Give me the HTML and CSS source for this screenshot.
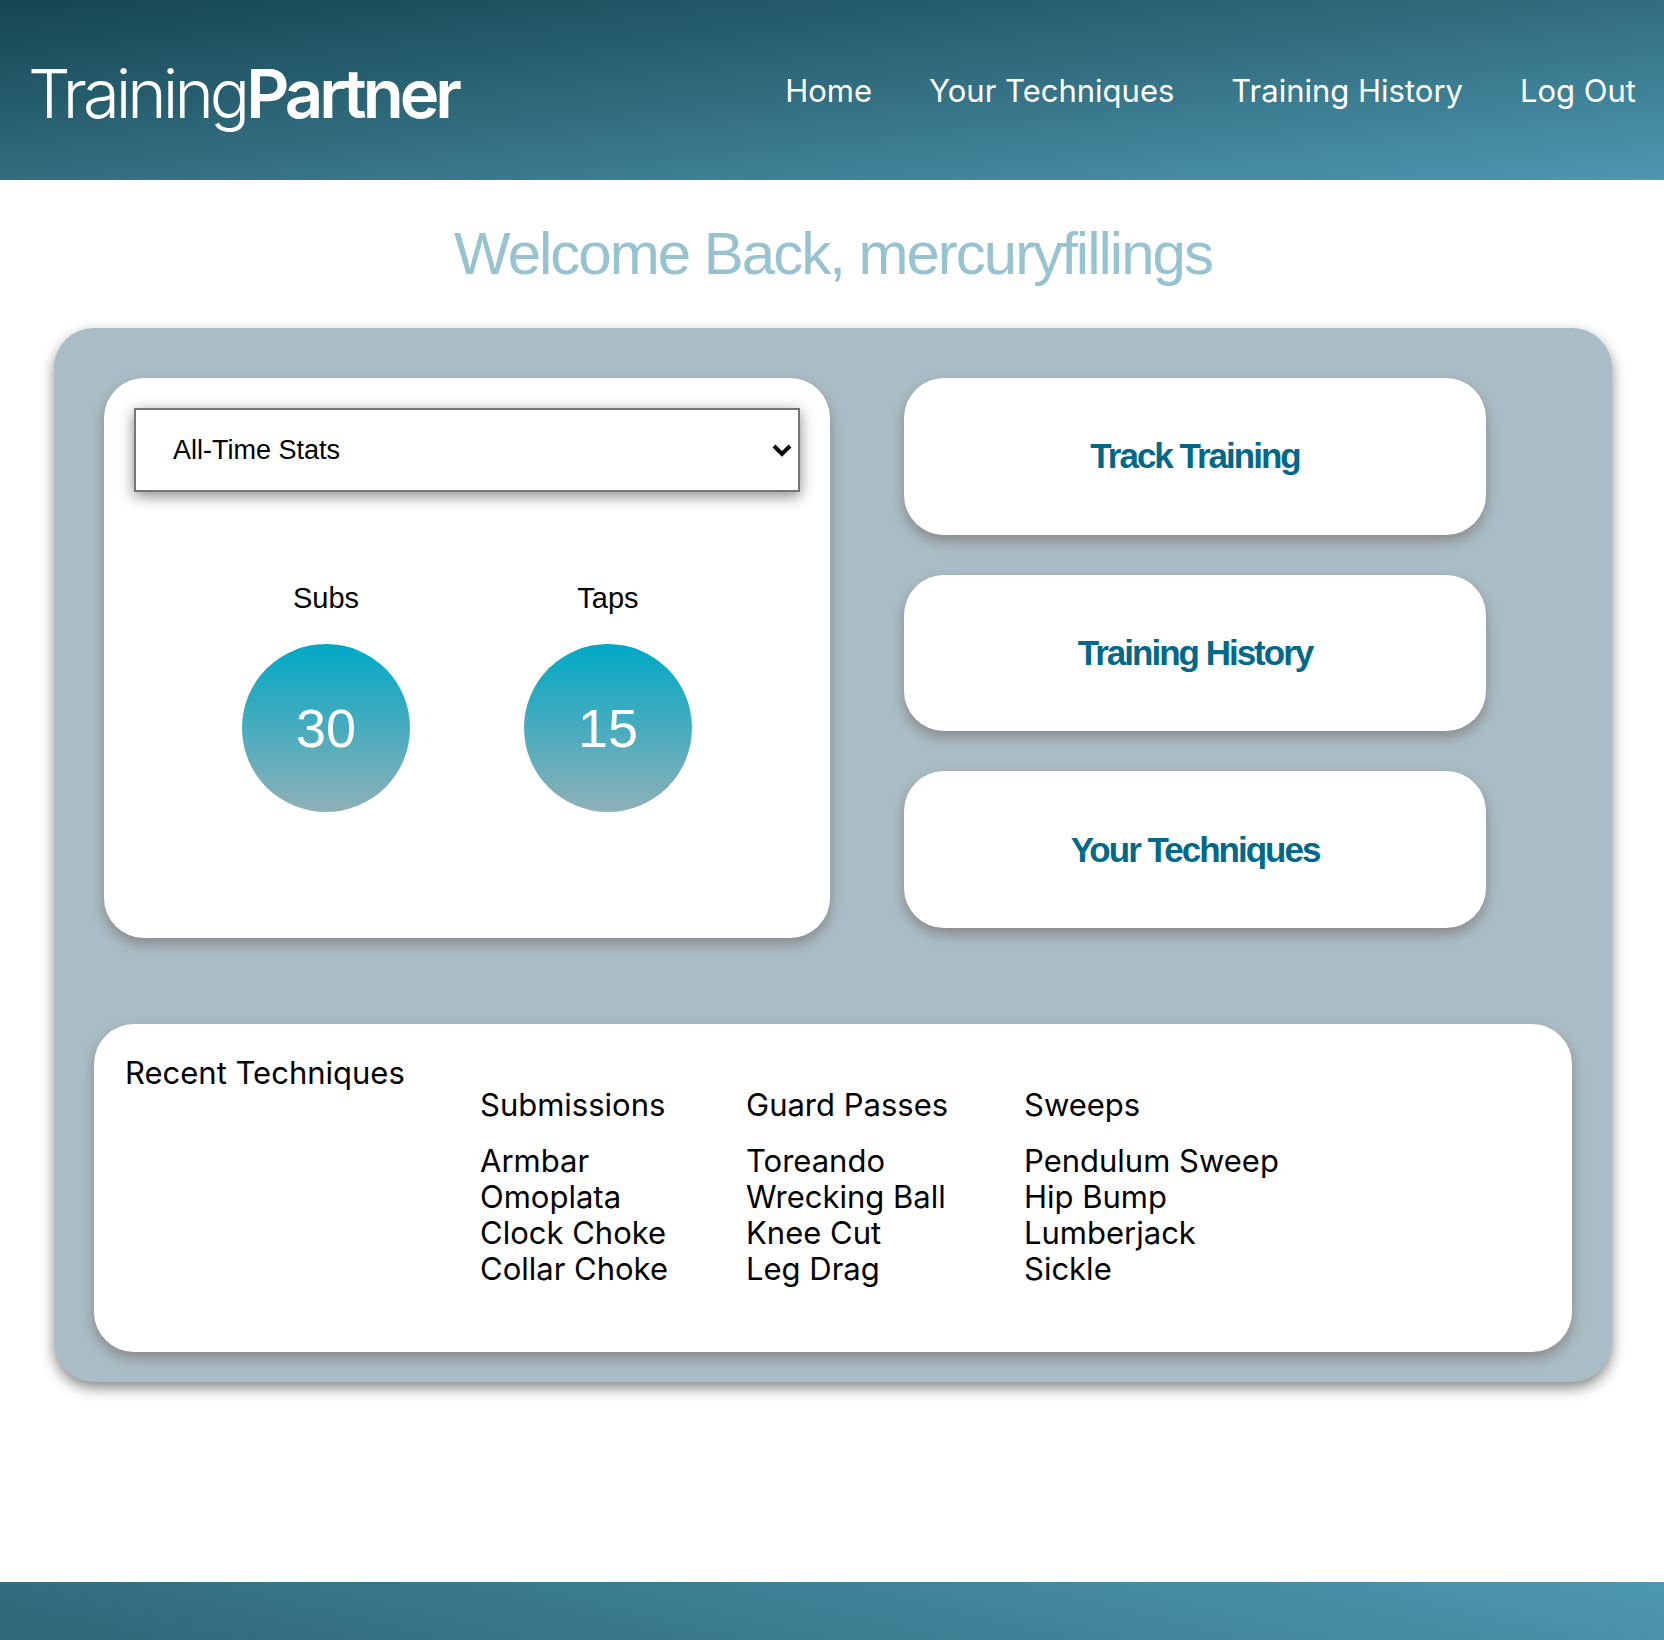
FILE: index.html
```html
<!DOCTYPE html>
<html lang="en">
<head>
  <meta charset="utf-8">
  <meta name="viewport" content="width=device-width, initial-scale=1">
  <title>TrainingPartner</title>
  <link rel="stylesheet" href="styles.css">
</head>
<body>
  <header class="site-header">
    <a class="logo" href="#">Training<strong>Partner</strong></a>
    <nav class="nav">
      <a href="#">Home</a>
      <a href="#">Your Techniques</a>
      <a href="#">Training History</a>
      <a href="#">Log Out</a>
    </nav>
  </header>

  <main class="main">
    <h1 class="welcome">Welcome Back, mercuryfillings</h1>

    <section class="panel">
      <div class="overview">
        <section class="card stats">
          <div class="range">
            <select class="range-select" aria-label="Stats period">
              <option>All-Time Stats</option>
            </select>
            <svg class="range-arrow" viewBox="0 0 20 13" width="20" height="13" aria-hidden="true">
              <path d="M2 2 L10 10 L18 2" fill="none" stroke="#000" stroke-width="4"/>
            </svg>
          </div>
          <div class="totals">
            <div class="total">
              <span class="total-label">Subs</span>
              <span class="total-value">30</span>
            </div>
            <div class="total">
              <span class="total-label">Taps</span>
              <span class="total-value">15</span>
            </div>
          </div>
        </section>

        <div class="actions">
          <button class="card action" type="button">Track Training</button>
          <button class="card action" type="button">Training History</button>
          <button class="card action" type="button">Your Techniques</button>
        </div>
      </div>

      <section class="card recent">
        <h2 class="recent-title">Recent Techniques</h2>
        <div class="group">
          <h3 class="group-title">Submissions</h3>
          <ul class="group-list">
            <li>Armbar</li>
            <li>Omoplata</li>
            <li>Clock Choke</li>
            <li>Collar Choke</li>
          </ul>
        </div>
        <div class="group">
          <h3 class="group-title">Guard Passes</h3>
          <ul class="group-list">
            <li>Toreando</li>
            <li>Wrecking Ball</li>
            <li>Knee Cut</li>
            <li>Leg Drag</li>
          </ul>
        </div>
        <div class="group">
          <h3 class="group-title">Sweeps</h3>
          <ul class="group-list">
            <li>Pendulum Sweep</li>
            <li>Hip Bump</li>
            <li>Lumberjack</li>
            <li>Sickle</li>
          </ul>
        </div>
      </section>
    </section>
  </main>

  <footer class="site-footer"></footer>
</body>
</html>
```
FILE: styles.css
```css
* {
  box-sizing: border-box;
}

body {
  margin: 0;
  min-height: 100vh;
  display: flex;
  flex-direction: column;
  background: #fff;
  color: #000;
  font-family: Inter, "Liberation Sans", sans-serif;
  font-size: 31px;
  line-height: 36px;
}

h1,
h2,
h3 {
  margin: 0;
  font-size: inherit;
  font-weight: 400;
}

.site-header {
  display: flex;
  align-items: center;
  justify-content: space-between;
  min-height: 180px;
  padding: 0 28px;
  background: linear-gradient(to bottom right, #144552, #326d7f 50%, #4d98b0);
}

.site-header a {
  color: #fff;
  text-decoration: none;
}

.logo {
  padding-top: 8px;
  font-size: 67px;
  line-height: 80px;
  font-weight: 300;
  letter-spacing: -4px;
}

.logo strong {
  font-weight: 600;
}

.nav {
  display: flex;
  gap: 57px;
  padding-top: 2px;
}

.main {
  flex: 1;
  padding: 0 52px 200px 54px;
}

.welcome {
  padding: 39px 0;
  color: #97c2d0;
  font-family: "Liberation Sans", Arial, sans-serif;
  font-size: 60px;
  line-height: 70px;
  letter-spacing: -2px;
  text-align: center;
}

.panel {
  padding: 50px 40px 30px;
  border-radius: 40px;
  background: #aabdc6;
  box-shadow: 0 6px 14px #888;
}

.card {
  border: 0;
  border-radius: 40px;
  background: #fff;
  box-shadow: 0 6px 14px #888;
}

.overview {
  display: grid;
  grid-template-columns: 121fr 97fr;
  gap: 74px;
  padding: 0 86px 86px 10px;
}

.stats {
  padding: 30px 30px 126px;
  font-family: "Liberation Sans", Arial, sans-serif;
}

.range {
  display: grid;
  align-items: center;
}

.range-select {
  grid-area: 1 / 1;
  width: 100%;
  height: 84px;
  padding: 0 37px;
  border: 2px solid #767676;
  border-radius: 0;
  appearance: none;
  background: #fff;
  color: #000;
  font: 27px "Liberation Sans", Arial, sans-serif;
  box-shadow: 0 4px 14px #888;
}

.range-arrow {
  grid-area: 1 / 1;
  justify-self: end;
  margin-right: 8px;
  pointer-events: none;
}

.totals {
  display: flex;
  justify-content: center;
  gap: 114px;
  padding-top: 88px;
}

.total {
  display: flex;
  flex-direction: column;
  align-items: center;
  gap: 28px;
}

.total-label {
  font-size: 29px;
}

.total-value {
  width: 168px;
  border-radius: 50%;
  background: linear-gradient(#00a8c5, #8fb0b7);
  color: #fff;
  font-size: 54px;
  line-height: 168px;
  text-align: center;
}

.actions {
  display: flex;
  flex-direction: column;
  gap: 40px;
  padding-bottom: 10px;
}

.action {
  flex: 1;
  color: #006888;
  font-family: "Liberation Sans", Arial, sans-serif;
  font-size: 35px;
  font-weight: 700;
  letter-spacing: -2px;
  cursor: pointer;
}

.recent {
  display: grid;
  grid-template-columns: 275px 186px 198px auto;
  gap: 80px;
  padding: 31px 31px 29px;
  white-space: nowrap;
}

.group {
  padding: 32px 0 36px;
}

.group-title {
  margin-bottom: 20px;
}

.group-list {
  margin: 0;
  padding: 0;
  list-style: none;
}

.site-footer {
  height: 58px;
  background: linear-gradient(to top right, #144552, #326d7f 50%, #4d98b0) top / 100% 400px;
}
```
